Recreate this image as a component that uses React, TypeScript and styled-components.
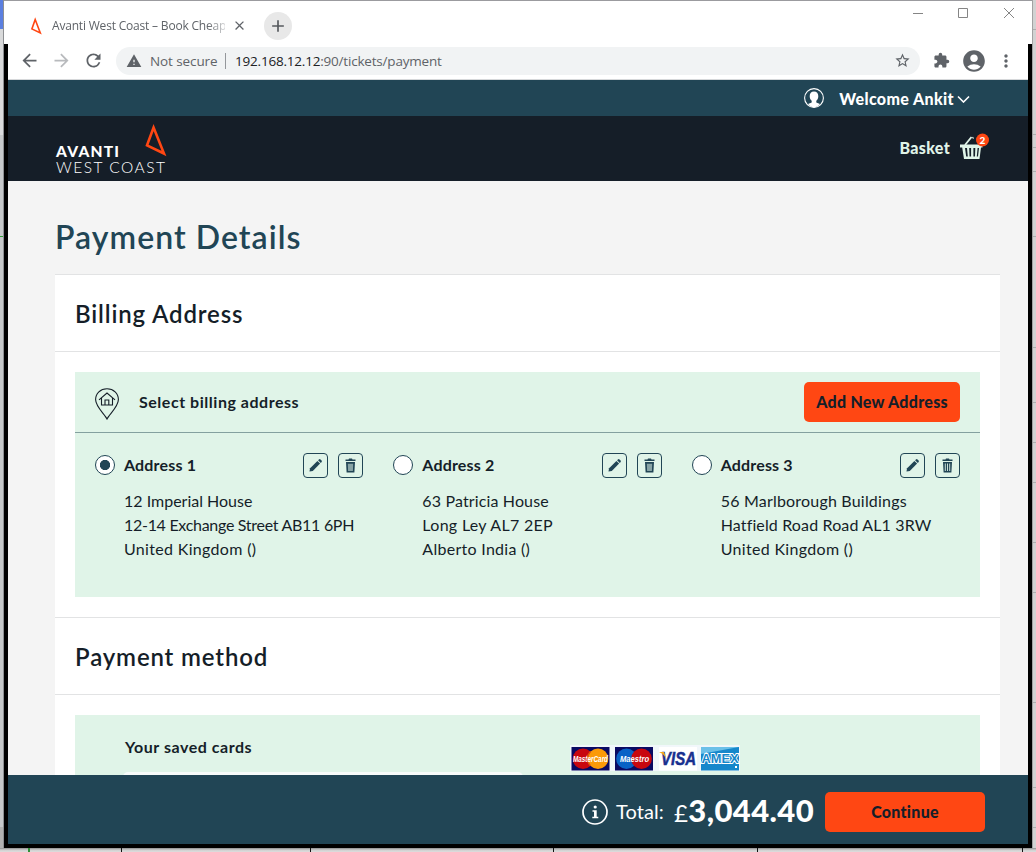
import React from 'react';
import styled, { createGlobalStyle } from 'styled-components';
import {
  MdAccountCircle, MdAdd, MdArrowBack, MdArrowForward, MdClose,
  MdExtension, MdMoreVert, MdRefresh, MdStarBorder, MdWarning,
} from 'react-icons/md';

const teal = '#214555';
const navy = '#151e28';
const orange = '#ff4713';
const mint = '#e0f4e8';
const brand = `Lato, "Open Sans", sans-serif`;

const GlobalStyle = createGlobalStyle`
  * { box-sizing: border-box; }
  body { margin: 0; overflow: hidden; font-family: ${brand}; color: ${navy}; }
  h1, h2, h3, p { margin: 0; }
  button { font-family: inherit; cursor: pointer; }
`;

const Desktop = styled.div`
  width: 1036px;
  height: 852px;
  overflow: hidden;
  display: grid;
  grid-template-columns: 4px 1028px 4px;
  grid-template-rows: 848px 4px;
  background: #dcdcdc;
`;

const LeftEdge = styled.div`
  border-right: 1px solid #8d8f92;
  background: linear-gradient(#5b7fe0 0 29px, #d9dadb 29px 135px, #c6c8ca 135px 236px, #2f9e36 236px 237px, #c6c8ca 237px 827px, #b1b1b1 827px);
`;

const RightEdge = styled.div`
  display: flex;
  flex-direction: column;
  border-left: 1px solid #a2a2a2;
  background: #d2d2d2;
`;

const EdgeCell = styled.div<{ $h: number }>`
  height: ${p => p.$h}px;
  flex: none;
  border-bottom: 1px solid #aeaeae;
`;

const BottomEdge = styled.div`
  grid-column: 1 / -1;
  display: flex;
  background: linear-gradient(#8d8d8d, #cfcfcf 2px, #dedede);
`;

const SheetCell = styled.div<{ $w: number; $green?: boolean }>`
  width: ${p => p.$w}px;
  flex: none;
  border-right: ${p => (p.$green ? '2px solid #2f8f36' : '1px solid #111')};
`;

const BrowserWindow = styled.div`
  display: flex;
  flex-direction: column;
  height: 848px;
  background: #000;
`;

const TabStrip = styled.div`
  height: 44px;
  flex: none;
  display: flex;
  background: #fff;
  border-top: 1px solid #9b9b9f;
`;

const Tab = styled.div`
  display: flex;
  align-items: center;
  padding: 6px 0 0 26px;
  width: 260px;
  color: #5f6368;
`;

const TabTitle = styled.span`
  width: 173px;
  margin-left: 10px;
  white-space: nowrap;
  font: 12px "Open Sans", sans-serif;
  letter-spacing: -0.19px;
  mask-image: linear-gradient(90deg, #000 155px, rgba(0, 0, 0, 0.25) 173px);
`;

const TabClose = styled.span`
  display: flex;
  margin-left: 7px;
`;

const NewTab = styled.div`
  display: grid;
  place-items: center;
  width: 28px;
  height: 28px;
  margin-top: 11px;
  border-radius: 50%;
  background: #e8e8e8;
  color: #55595d;
`;

const WindowControls = styled.div`
  display: flex;
  margin: 6px 17px 0 auto;
  height: 12px;
`;

const Toolbar = styled.div`
  height: 36px;
  margin: 0 4px;
  flex: none;
  display: flex;
  align-items: center;
  padding-bottom: 2px;
  background: #fff;
  border-bottom: 1px solid #d6d8da;
  color: #5f6368;
`;

const NavButtons = styled.div`
  display: flex;
  align-items: center;
  gap: 11px;
  width: 108px;
  padding-left: 11px;
`;

const AddressBar = styled.div`
  display: flex;
  align-items: center;
  width: 804px;
  height: 28px;
  padding: 0 9px 0 10px;
  border-radius: 14px;
  background: #f1f3f4;
  font: 13.5px "Open Sans", sans-serif;
  letter-spacing: -0.2px;
`;

const NotSecure = styled.span`
  width: 76px;
  margin-left: 8px;
  border-right: 1px solid #94979b;
  line-height: 16px;
  letter-spacing: -0.1px;
`;

const Url = styled.span`
  margin-left: 9px;
  flex: 1;
  b { font-weight: 400; color: #202124; }
`;

const ToolbarIcons = styled.div`
  display: flex;
  align-items: center;
  padding-left: 13px;
`;

const Page = styled.main`
  height: 764px;
  margin: 0 4px;
  display: flex;
  flex-direction: column;
  background: #f4f4f4;
`;

const AccountBar = styled.div`
  height: 36px;
  flex: none;
  display: flex;
  align-items: center;
  justify-content: flex-end;
  padding-right: 58px;
  background: ${teal};
  color: #fff;
`;

const Welcome = styled.span`
  margin: 0 3px 0 15px;
  font-size: 16px;
  font-weight: 900;
  letter-spacing: 0.37px;
`;

const SiteHeader = styled.header`
  height: 65px;
  flex: none;
  display: flex;
  justify-content: space-between;
  padding: 0 39px 0 40px;
  background: ${navy};
`;

const Basket = styled.div`
  display: flex;
  align-items: center;
  gap: 9px;
  padding-bottom: 3px;
  color: ${mint};
  font-size: 16px;
  font-weight: 900;
  letter-spacing: 0.3px;
`;

const Content = styled.div`
  flex: 1;
  min-height: 0;
  overflow: hidden;
  padding: 0 28px 0 47px;
`;

const PageTitle = styled.h1`
  height: 93px;
  padding: 34px 0 0;
  font-size: 32px;
  line-height: 44px;
  font-weight: 600;
  letter-spacing: 1.05px;
  color: ${teal};
`;

const Card = styled.section`
  background: #fff;
`;

const SectionTitle = styled.h2`
  height: 78px;
  padding-left: 20px;
  border: solid #e2e3e4;
  border-width: 1px 0;
  font-size: 24px;
  font-weight: 600;
  line-height: 77px;
  letter-spacing: 0.85px;
`;

const Panel = styled.div<{ $h: number }>`
  height: ${p => p.$h}px;
  margin: 20px 20px;
  background: ${mint};
`;

const PanelHead = styled.div`
  display: flex;
  align-items: center;
  height: 61px;
  padding: 0 20px;
  border-bottom: 1px solid #84a09f;
  > svg { margin-top: 3px; }
`;

const PanelLabel = styled.h3`
  flex: 1;
  margin-left: 20px;
  padding-bottom: 2px;
  font-size: 16px;
  font-weight: 700;
  letter-spacing: 0.53px;
`;

const OrangeButton = styled.button<{ $w: number }>`
  width: ${p => p.$w}px;
  height: 40px;
  padding: 0 0 2px;
  border: 0;
  border-radius: 5px;
  background: ${orange};
  color: ${navy};
  font-size: 16px;
  font-weight: 900;
  letter-spacing: 0.28px;
`;

const AddressGrid = styled.div`
  display: grid;
  grid-template-columns: repeat(3, 1fr);
  column-gap: 30px;
  padding: 20px 20px 0;
`;

const AddressHead = styled.div`
  display: flex;
  align-items: center;
  height: 25px;
`;

const Radio = styled.span<{ $on: boolean }>`
  width: 20px;
  height: 20px;
  margin-top: -1px;
  border: 1px solid ${teal};
  border-radius: 50%;
  background: ${p => (p.$on ? `radial-gradient(circle, ${teal} 4.8px, #fff 5.4px)` : '#fff')};
`;

const AddressName = styled.span`
  flex: 1;
  margin-left: 9px;
  padding-bottom: 2px;
  font-size: 16px;
  font-weight: 700;
  letter-spacing: 0.17px;
`;

const IconButton = styled.button`
  display: grid;
  place-items: center;
  width: 25px;
  height: 25px;
  margin-left: 10px;
  padding: 0;
  border: 1px solid ${teal};
  border-radius: 4px;
  background: none;
  color: ${teal};
`;

const AddressLines = styled.div`
  padding: 11px 0 0 29px;
  font-size: 16px;
  line-height: 24px;
  white-space: nowrap;
`;

const Line = styled.p<{ $track: number }>`
  letter-spacing: ${p => p.$track}px;
`;

const CardsHead = styled.div`
  display: flex;
  height: 57px;
  padding: 0 240px 0 50px;
  justify-content: space-between;
  align-items: flex-start;
  h3 { padding-top: 20px; font-size: 16px; line-height: 24px; letter-spacing: 0.53px; }
  svg { margin-top: 30px; }
`;

const SavedCard = styled.div`
  height: 60px;
  margin-left: 48px;
  width: 400px;
  border-radius: 5px;
  background: #f8fbfa;
`;

const Footer = styled.footer`
  height: 69px;
  flex: none;
  display: flex;
  align-items: center;
  justify-content: flex-end;
  padding: 5px 43px 0 0;
  background: ${teal};
  color: #fff;
`;

const TotalLabel = styled.span`
  margin-left: 8px;
  padding-bottom: 2px;
  width: 58px;
  font-size: 20px;
  letter-spacing: 0.1px;
  white-space: nowrap;
`;

const Amount = styled.span`
  width: 141px;
  margin-right: 10px;
  padding-bottom: 5px;
  font-size: 31px;
  font-weight: 900;
  letter-spacing: 0.4px;
  white-space: nowrap;
  span { font-size: 24px; font-weight: 400; }
`;

const AvantiMark = () => (
  <svg width="12" height="18" viewBox="0 0 12 18" fill="none" stroke={orange} strokeWidth="1.6">
    <path d="M5.2 2.5 1.9 11.9 10.3 15.9Z" />
  </svg>
);

const Logo = () => (
  <svg width="120" height="65" viewBox="0 0 120 65" fill="none">
    <path d="M105.600 11.500 99 29.300 116 37.500Z" stroke={orange} strokeWidth="2.600" />
    <text x="8" y="40.500" fill="#fff" fontFamily="Lato" fontWeight="900" fontSize="15.500" textLength="63">AVANTI</text>
    <text x="8" y="56.700" fill="#fff" fontFamily="Lato" fontWeight="300" fontSize="15.500" textLength="109">WEST COAST</text>
  </svg>
);

const ProfileIcon = () => (
  <svg width="20" height="20" viewBox="0 0 20 20">
    <circle cx="10" cy="10" r="9.4" fill="none" stroke="#fff" strokeWidth="1.100" />
    <path d="M10 3.600c-2.800 0-4.300 1.800-4.300 4.600 0 2 .9 3.600 2 4.600v1.600L4 16c1.500 2 3.600 3.200 6 3.200s4.500-1.200 6-3.200l-3.700-1.600v-1.600c1.100-1 2-2.600 2-4.600 0-2.800-1.500-4.600-4.300-4.600Z" fill="#fff" />
  </svg>
);

const Chevron = () => (
  <svg width="13" height="9" viewBox="0 0 13 9" fill="none" stroke="#fff" strokeWidth="1.600">
    <path d="m1 2.500 5.500 5.500L12 2.500" />
  </svg>
);

const BasketIcon = () => (
  <svg width="30" height="28" viewBox="0 0 30 28">
    <path d="m6 12 6.500-8" stroke={mint} strokeWidth="1.800" />
    <path d="m13.500 4 1 1.600" stroke={mint} strokeWidth="1.200" />
    <path fillRule="evenodd" fill={mint} d="M1 11.500h22.500v3H22L20.500 26H5L3.200 14.500H1ZM6 15l1.200 8.500h1.600L8 15Zm4.200 0 .3 8.500h1.600V15Zm4.200 0v8.500H16l.3-8.500Zm4.200 0-.8 8.500h1.200L20 15Z" />
    <circle cx="23.500" cy="7" r="6.500" fill={orange} />
    <text x="23.500" y="10.600" textAnchor="middle" fontFamily="Lato" fontWeight="900" fontSize="10" fill="#fff">2</text>
  </svg>
);

const HomePin = () => (
  <svg width="24" height="32" viewBox="0 0 24 32" fill="none" stroke={navy} strokeWidth="1.100">
    <path d="M12 31C10 26.500.6 18.800.6 11.500.6 5.300 5.500.7 12 .7s11.400 4.600 11.400 10.800C23.400 18.800 14 26.500 12 31Z" />
    <path d="M4 11.800 12 5l8 6.800M6.500 10v7H17.500v-7M10 17v-5h3.800v5" />
  </svg>
);

const PencilIcon = () => (
  <svg width="15" height="15" viewBox="0 0 15 15" fill="currentColor">
    <path d="m1.500 13.500.6-3.300 7.300-7.300 2.700 2.700-7.300 7.300Z" />
    <path d="m10.100 2.200.8-.8q.8-.7 1.600 0l1.100 1.100q.7.800 0 1.600l-.8.800Z" />
  </svg>
);

const TrashIcon = ({ slotted }: { slotted: boolean }) => (
  <svg width="11" height="15" viewBox="0 0 11 15" fill="currentColor">
    <path d="M.5 1.500h3L4 .5h3l.5 1h3V3H.5ZM1 4h9l-.6 10.500H1.600Z" />
    {slotted
      ? <path d="M3.300 5.500v7.500M5.500 5.500v7.500M7.700 5.500v7.500" stroke={mint} strokeWidth=".9" />
      : <path d="M2.800 5.800h5.400l-.3 7.200H3.100Z" fill="#87a3a5" />}
  </svg>
);

const InfoIcon = () => (
  <svg width="26" height="26" viewBox="0 0 26 26">
    <circle cx="13" cy="13" r="12" fill="none" stroke="#fff" strokeWidth="1.700" />
    <circle cx="13.200" cy="8" r="1.600" fill="#fff" />
    <path d="M10.500 11.300h4.200v6.500h1.600v1.500h-6v-1.500H12v-5h-1.500Z" fill="#fff" />
  </svg>
);

const CardLogos = () => (
  <svg width="170" height="26" viewBox="0 0 170 26" fontFamily="Liberation Sans" fontWeight="700" fontStyle="italic">
    <rect width="170" height="26" fill="#f1f7fa" />
    <rect x="1.500" y="2" width="38" height="23.500" fill="#0a0a62" />
    <circle cx="13" cy="13.700" r="10.300" fill="#c8070f" />
    <circle cx="28" cy="13.700" r="10.300" fill="#fb9a08" />
    <path d="M20.500 6.600a10.300 10.300 0 0 0 0 14.200" stroke="#e0560c" strokeWidth="1.500" fill="none" />
    <text x="3" y="16.500" fontSize="8.500" textLength="35" lengthAdjust="spacingAndGlyphs" fill="#fff">MasterCard</text>
    <rect x="45" y="2" width="38" height="23.500" fill="#0a0a62" />
    <circle cx="56.500" cy="13.700" r="10.300" fill="#0862c6" />
    <circle cx="71.500" cy="13.700" r="10.300" fill="#c8070f" />
    <text x="50" y="16.500" fontSize="8.500" textLength="29" lengthAdjust="spacingAndGlyphs" fill="#fff">Maestro</text>
    <rect x="89" y="2" width="38" height="23.500" fill="#fff" />
    <text x="91" y="20" fontSize="18" textLength="35" lengthAdjust="spacingAndGlyphs" fill="#18308f" stroke="#18308f" strokeWidth=".5">VISA</text>
    <path d="M89 7h5l2.500 7C94.500 10.500 92.500 8.500 89 7Z" fill="#f4a81c" />
    <rect x="131" y="2" width="38" height="23.500" fill="#1687cb" />
    <path d="M131 2h38L131 9Z" fill="#6bc0e8" />
    <text x="131.500" y="18" fontSize="13" fontStyle="normal" textLength="37" lengthAdjust="spacingAndGlyphs" fill="#1687cb" stroke="#fff" strokeWidth="1.800" paintOrder="stroke">AMEX</text>
    <rect x="165" y="21" width="2" height="2" fill="#fff" />
  </svg>
);

type AddressLine = [text: string, track: number];

const addresses: { lines: AddressLine[]; selected: boolean }[] = [
  { lines: [['12 Imperial House', 0], ['12-14 Exchange Street AB11 6PH', -0.29], ['United Kingdom ()', 0.32]], selected: true },
  { lines: [['63 Patricia House', 0.14], ['Long Ley AL7 2EP', 0.3], ['Alberto India ()', 0.28]], selected: false },
  { lines: [['56 Marlborough Buildings', 0.2], ['Hatfield Road Road AL1 3RW', 0.14], ['United Kingdom ()', 0.32]], selected: false },
];

export default function App() {
  return (
    <>
      <GlobalStyle />
      <Desktop>
        <LeftEdge />
        <BrowserWindow>
          <TabStrip>
            <Tab>
              <AvantiMark />
              <TabTitle>Avanti West Coast – Book Cheap</TabTitle>
              <TabClose><MdClose size={15} /></TabClose>
            </Tab>
            <NewTab><MdAdd size={20} /></NewTab>
            <WindowControls>
              <svg width="102" height="12" viewBox="0 0 102 12" fill="none" stroke="#858585">
                <path d="M0 6.500h10M45.500 1.500h9v9h-9ZM91 1l10 10M101 1 91 11" />
              </svg>
            </WindowControls>
          </TabStrip>
          <Toolbar>
            <NavButtons>
              <MdArrowBack size={21} />
              <MdArrowForward size={21} color="#b8babd" />
              <MdRefresh size={21} />
            </NavButtons>
            <AddressBar>
              <MdWarning size={16} />
              <NotSecure>Not secure</NotSecure>
              <Url><b>192.168.12.12</b>:90/tickets/payment</Url>
              <MdStarBorder size={17} />
            </AddressBar>
            <ToolbarIcons>
              <MdExtension size={17} />
              <MdAccountCircle size={26} style={{ marginLeft: 11 }} />
              <MdMoreVert size={20} style={{ marginLeft: 9 }} />
            </ToolbarIcons>
          </Toolbar>
          <Page>
            <AccountBar>
              <ProfileIcon />
              <Welcome>Welcome Ankit</Welcome>
              <Chevron />
            </AccountBar>
            <SiteHeader>
              <Logo />
              <Basket>
                <span>Basket</span>
                <BasketIcon />
              </Basket>
            </SiteHeader>
            <Content>
              <PageTitle>Payment Details</PageTitle>
              <Card>
                <SectionTitle>Billing Address</SectionTitle>
                <Panel $h={225}>
                  <PanelHead>
                    <HomePin />
                    <PanelLabel>Select billing address</PanelLabel>
                    <OrangeButton $w={156}>Add New Address</OrangeButton>
                  </PanelHead>
                  <AddressGrid>
                    {addresses.map((a, i) => (
                      <div key={i}>
                        <AddressHead>
                          <Radio $on={a.selected} />
                          <AddressName>Address {i + 1}</AddressName>
                          <IconButton><PencilIcon /></IconButton>
                          <IconButton><TrashIcon slotted={i === 2} /></IconButton>
                        </AddressHead>
                        <AddressLines>
                          {a.lines.map(([text, track]) => <Line key={text} $track={track}>{text}</Line>)}
                        </AddressLines>
                      </div>
                    ))}
                  </AddressGrid>
                </Panel>
                <SectionTitle>Payment method</SectionTitle>
                <Panel $h={225}>
                  <CardsHead>
                    <h3>Your saved cards</h3>
                    <CardLogos />
                  </CardsHead>
                  <SavedCard />
                </Panel>
              </Card>
            </Content>
            <Footer>
              <InfoIcon />
              <TotalLabel>Total:</TotalLabel>
              <Amount><span>£</span>3,044.40</Amount>
              <OrangeButton $w={160}>Continue</OrangeButton>
            </Footer>
          </Page>
        </BrowserWindow>
        <RightEdge>
          {[30, 105, 13, 24, 65, 111, 55, 40, 40, 60, 50, 110, 85, 40].map((h, i) => <EdgeCell key={i} $h={h} />)}
        </RightEdge>
        <BottomEdge>
          <SheetCell $w={30} $green />
          <SheetCell $w={92} />
          <SheetCell $w={189} />
          <SheetCell $w={243} />
          <SheetCell $w={204} />
          <SheetCell $w={265} />
        </BottomEdge>
      </Desktop>
    </>
  );
}
